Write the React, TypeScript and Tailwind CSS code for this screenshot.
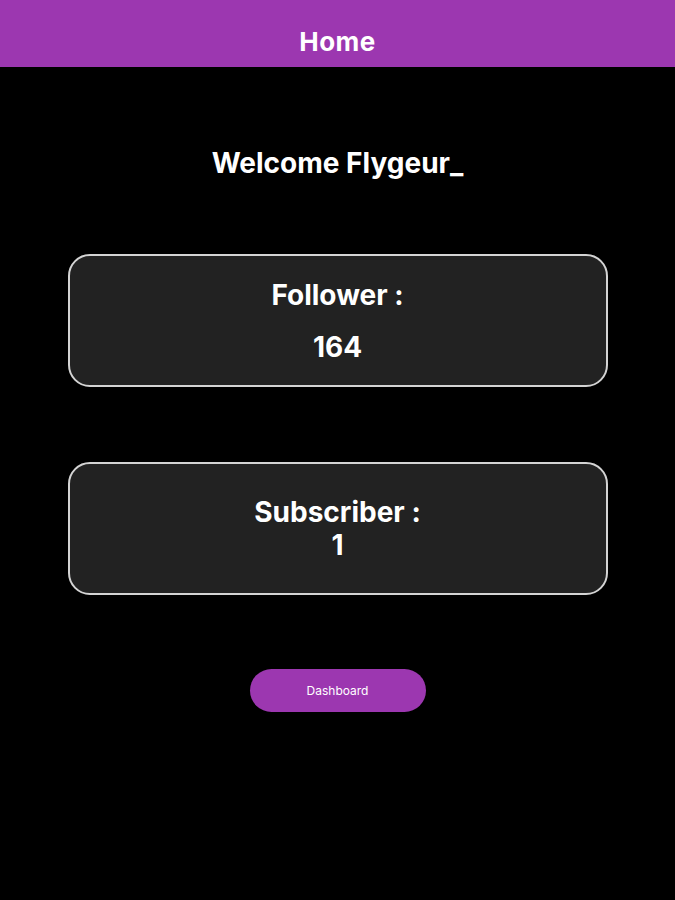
export default function App() {
  return (
    <div
      className="min-h-[900px] bg-black text-white"
      style={{ fontFamily: "Inter, 'Noto Sans', sans-serif" }}
    >
      <header className="flex h-[67px] items-center justify-center bg-[#9c37b0] pt-[17px]">
        <h1 className="text-[26px] leading-[30px] font-bold tracking-[0.5px]">Home</h1>
      </header>

      <div className="flex flex-col items-center pt-[80px]">
        <h2 className="text-[28px] leading-[32px] font-bold">Welcome Flygeur_</h2>

        <div className="mt-[75px] flex h-[133px] w-[540px] flex-col items-center justify-center gap-[20px] rounded-[22px] border-2 border-[#d4d4d4] bg-[#222222]">
          <p className="text-[28px] leading-[32px] font-bold">Follower :</p>
          <p className="text-[28px] leading-[32px] font-bold">164</p>
        </div>

        <div className="mt-[75px] flex h-[133px] w-[540px] flex-col items-center justify-center rounded-[22px] border-2 border-[#d4d4d4] bg-[#222222]">
          <p className="text-[28px] leading-[33px] font-bold">Subscriber :</p>
          <p className="text-[28px] leading-[33px] font-bold">1</p>
        </div>

        <button className="mt-[74px] h-[43px] w-[176px] rounded-full bg-[#9c37b0] text-[12px] text-white">
          Dashboard
        </button>
      </div>
    </div>
  );
}
